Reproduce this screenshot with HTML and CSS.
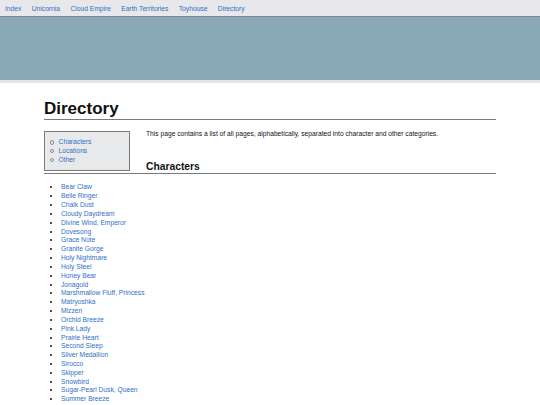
FILE: index.html
```html
<!DOCTYPE html>
<html lang="en">
<head>
<meta charset="utf-8">
<title>Directory</title>
<link rel="stylesheet" href="styles.css">
</head>
<body>
<nav class="topnav">
  <a href="#">Index</a>
  <a href="#">Unicornia</a>
  <a href="#">Cloud Empire</a>
  <a href="#">Earth Territories</a>
  <a href="#">Toyhouse</a>
  <a href="#">Directory</a>
</nav>
<header class="banner"></header>
<main class="content">
  <h1 class="title">Directory</h1>
  <div class="toc">
    <ul>
      <li><a href="#characters">Characters</a></li>
      <li><a href="#locations">Locations</a></li>
      <li><a href="#other">Other</a></li>
    </ul>
  </div>
  <p class="intro">This page contains a list of all pages, alphabetically, separated into character and other categories.</p>
  <h2 class="section" id="characters">Characters</h2>
  <ul class="pages">
    <li><a href="#">Bear Claw</a></li>
    <li><a href="#">Belle Ringer</a></li>
    <li><a href="#">Chalk Dust</a></li>
    <li><a href="#">Cloudy Daydream</a></li>
    <li><a href="#">Divine Wind, Emperor</a></li>
    <li><a href="#">Dovesong</a></li>
    <li><a href="#">Grace Note</a></li>
    <li><a href="#">Granite Gorge</a></li>
    <li><a href="#">Holy Nightmare</a></li>
    <li><a href="#">Holy Steel</a></li>
    <li><a href="#">Honey Bear</a></li>
    <li><a href="#">Jonagold</a></li>
    <li><a href="#">Marshmallow Fluff, Princess</a></li>
    <li><a href="#">Matryoshka</a></li>
    <li><a href="#">Mizzen</a></li>
    <li><a href="#">Orchid Breeze</a></li>
    <li><a href="#">Pink Lady</a></li>
    <li><a href="#">Prairie Heart</a></li>
    <li><a href="#">Second Sleep</a></li>
    <li><a href="#">Silver Medallion</a></li>
    <li><a href="#">Sirocco</a></li>
    <li><a href="#">Skipper</a></li>
    <li><a href="#">Snowbird</a></li>
    <li><a href="#">Sugar-Pearl Dusk, Queen</a></li>
    <li><a href="#">Summer Breeze</a></li>
  </ul>
</main>
</body>
</html>
```

FILE: styles.css
```css
html, body {
  margin: 0;
  padding: 0;
  background: #ffffff;
}
body {
  font-family: "Liberation Sans", Arial, sans-serif;
  font-size: 6.7px;
  line-height: 8.83px;
  color: #111111;
}
a {
  color: #2f6fc6;
  text-decoration: none;
}
.topnav {
  display: flex;
  align-items: center;
  gap: 10.4px;
  height: 16px;
  padding-left: 5px;
  background: #e8e8ea;
  border-bottom: 1px solid #7d878d;
}
.topnav a {
  font-size: 6.7px;
  line-height: 16px;
  padding-top: 1px;
}
.banner {
  height: 63px;
  background: #89a9b9;
  border-bottom: 3px solid #e0e5ea;
}
.content {
  width: 452px;
  margin: 0 auto;
}
.title {
  margin: 16px 0 0;
  font-size: 17px;
  line-height: 20px;
  font-weight: bold;
  border-bottom: 1px solid #7a7a7a;
}
.toc {
  float: left;
  width: 84px;
  margin: 11px 16px 0 0;
  background: #e8e9eb;
  border: 1px solid #7a7a7a;
  padding: 6px 0 6px;
}
.toc ul {
  margin: 0;
  padding-left: 13px;
  list-style: none;
}
.toc li {
  display: flex;
  align-items: center;
}
.toc li::before {
  content: "";
  width: 2.4px;
  height: 2.4px;
  border: 0.6px solid #8c8c8c;
  border-radius: 50%;
  margin-left: -8.5px;
  margin-right: 4.7px;
  flex: none;
}
.intro {
  margin: 10px 0 0;
}
.section {
  margin: 22px 0 0;
  font-size: 10.3px;
  line-height: 12px;
  font-weight: bold;
  border-bottom: 1px solid #7a7a7a;
}
.pages {
  clear: both;
  margin: 9.6px 0 0;
  padding-left: 17px;
  list-style: disc;
}
```
